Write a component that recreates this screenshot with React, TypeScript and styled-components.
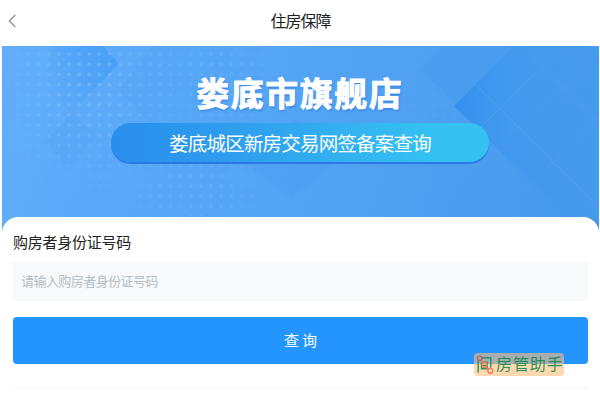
import React, { useState } from 'react';
import styled, { createGlobalStyle } from 'styled-components';

const GlobalStyle = createGlobalStyle`
  * {
    box-sizing: border-box;
  }
  body {
    margin: 0;
    background: #fff;
    font-family: 'Noto Sans CJK SC', sans-serif;
  }
`;

const Page = styled.div`
  display: flex;
  flex-direction: column;
  width: 600px;
  height: 400px;
  padding: 0 1px 0 2px;
  overflow: hidden;
`;

const NavBar = styled.header`
  display: grid;
  grid-template-columns: 40px 1fr 40px;
  align-items: center;
  flex: none;
  height: 46px;
  padding-bottom: 6px;
`;

const BackButton = styled.button`
  display: flex;
  border: 0;
  padding: 2px 0 0 6px;
  background: none;
`;

const NavTitle = styled.h1`
  margin: 0;
  color: #222;
  font-size: 16px;
  font-weight: 400;
  line-height: 24px;
  letter-spacing: -1px;
  text-align: center;
`;

const Banner = styled.section`
  position: relative;
  display: flex;
  flex-direction: column;
  align-items: center;
  flex: none;
  height: 187px;
  padding: 25px 1px 0 0;
`;

const BannerArt = styled.svg`
  position: absolute;
  inset: 0;
`;

const StoreName = styled.h2`
  position: relative;
  margin: 0;
  color: #fff;
  font-size: 32.5px;
  font-weight: 700;
  line-height: 42px;
  letter-spacing: 2px;
  -webkit-text-stroke: 1px #fff;
  text-shadow: 1px 2px 2px rgba(24, 100, 205, 0.45);
`;

const ServicePill = styled.div`
  position: relative;
  width: 378px;
  height: 39px;
  margin-top: 10px;
  border-radius: 20px;
  background: linear-gradient(90deg, #298eed, #2f9fee 35%, #35c2f2 85%);
  box-shadow: 0 2px 0 #2b78e4;
  color: #fff;
  font-size: 19.5px;
  line-height: 39px;
  letter-spacing: -0.8px;
  text-align: center;
`;

const Sheet = styled.main`
  position: relative;
  display: flex;
  flex-direction: column;
  flex: 1;
  margin-top: -16px;
  padding: 13px 11px 0;
  border-radius: 16px 16px 0 0;
  background: #fff;
`;

const FieldLabel = styled.label`
  color: #222;
  font-size: 15px;
  line-height: 24px;
  letter-spacing: -0.25px;
`;

const FieldInput = styled.input`
  width: 100%;
  height: 39px;
  margin-top: 8px;
  border: 0;
  padding: 0 8px 2px;
  background: #f7f9fb;
  color: #222;
  font-family: inherit;
  font-size: 13px;
  letter-spacing: -0.55px;
  outline: none;

  &::placeholder {
    color: #b3bdc4;
    opacity: 1;
  }
`;

const SubmitButton = styled.button`
  width: 100%;
  height: 47px;
  margin-top: 16px;
  border: 0;
  border-radius: 4px;
  padding: 0 0 2px 3px;
  background: #2494ff;
  color: #fff;
  font-family: inherit;
  font-size: 15px;
  letter-spacing: 3px;
`;

const Divider = styled.hr`
  width: 100%;
  height: 1px;
  margin: 24px 0 0;
  border: 0;
  background: #f5f5f5;
`;

const HelperBadge = styled.div`
  position: absolute;
  right: 35px;
  bottom: 24px;
  display: flex;
  align-items: center;
  gap: 2px;
  width: 90px;
  height: 23px;
  padding-left: 2px;
  border-radius: 4px;
  background: rgba(255, 190, 123, 0.6);
  color: rgba(6, 136, 72, 0.88);
  font-size: 16px;
  line-height: 21px;
  letter-spacing: 0.9px;
  white-space: nowrap;
`;

const HelperName = styled.span`
  height: 23px;
`;

function BannerBackground() {
  return (
    <BannerArt width="597" height="187" viewBox="0 0 597 187">
      <defs>
        <linearGradient id="sky" x1="0" y1="0" x2="1" y2="0.1">
          <stop offset="0" stopColor="#62aefc" />
          <stop offset="0.45" stopColor="#55a5f5" />
          <stop offset="1" stopColor="#479bed" />
        </linearGradient>
        <linearGradient id="diamond" x1="117" y1="10" x2="45" y2="45" gradientUnits="userSpaceOnUse">
          <stop offset="0" stopColor="#3c98f6" stopOpacity="0.6" />
          <stop offset="0.5" stopColor="#3f9bf6" stopOpacity="0.4" />
          <stop offset="1" stopColor="#4ba0f6" stopOpacity="0" />
        </linearGradient>
        <linearGradient id="slab" x1="0" y1="0.3" x2="1" y2="0.3">
          <stop offset="0" stopColor="#2b8bec" stopOpacity="0.75" />
          <stop offset="0.45" stopColor="#3c95ee" stopOpacity="0.4" />
          <stop offset="1" stopColor="#4599ed" stopOpacity="0.2" />
        </linearGradient>
        <radialGradient id="glow">
          <stop offset="0" stopColor="#fff" stopOpacity="1" />
          <stop offset="1" stopColor="#fff" stopOpacity="0.1" />
        </radialGradient>
        <pattern id="dots" x="1" y="3" width="10.15" height="10.15" patternUnits="userSpaceOnUse">
          <circle cx="5.1" cy="5.1" r="1.9" fill="#9dd0ff" />
        </pattern>
        <mask id="dotFade">
          <ellipse cx="86" cy="36" rx="90" ry="110" fill="url(#glow)" opacity="0.9" />
          <ellipse cx="215" cy="30" rx="75" ry="65" fill="url(#glow)" opacity="0.5" />
          <ellipse cx="195" cy="145" rx="75" ry="50" fill="url(#glow)" opacity="0.5" />
          <ellipse cx="430" cy="65" rx="60" ry="40" fill="url(#glow)" opacity="0.2" />
        </mask>
      </defs>
      <rect width="597" height="187" fill="url(#sky)" />
      <path d="M52 0H101L117 18L69 67L40 40Z" fill="url(#diamond)" />
      <path d="M69 67L95 91L68 123L43 97Z" fill="#4c9ff4" opacity="0.22" />
      <path d="M150 0H223L243 23L169 98L117 45Z" fill="#4b9ff4" opacity="0.16" />
      <path d="M105 65L195 155L165 187H70L40 130Z" fill="#58a8f8" opacity="0.2" />
      <path d="M295 72L336 113L290 152L240 115Z" fill="#4397ee" opacity="0.2" />
      <path d="M419 24L442 0H510L455 60Z" fill="#4296ec" opacity="0.2" />
      <path d="M452 60L512 0H597V187H581Z" fill="url(#slab)" />
      <g stroke="#7bbdf8" strokeWidth="0.8" opacity="0.32" fill="none">
        <path d="M472 37L597 162" />
        <path d="M525 5L597 76" opacity="0.6" />
        <path d="M475 85L535 26" />
        <path d="M450 140L590 15" opacity="0.4" />
        <path d="M528 140L597 70" opacity="0.5" />
      </g>
      <rect width="597" height="187" fill="url(#dots)" mask="url(#dotFade)" opacity="0.45" />
    </BannerArt>
  );
}

function BackIcon() {
  return (
    <svg width="9" height="14" viewBox="0 0 9 14" fill="none" stroke="#8c8c8c" strokeWidth="1.2">
      <path d="M7.3 1L1.3 7L7.3 13" />
    </svg>
  );
}

function HelperIcon() {
  return (
    <svg width="18" height="21" viewBox="0 0 18 21" fill="none">
      <path
        d="M2.2 6V18.5M6 3.7H14.8V13.5M5.5 8.3H11.2V14.7H5.5V8.3M5.5 11.5H11"
        stroke="#259567"
        strokeWidth="1.5"
      />
      <g stroke="#f17a58" strokeWidth="1.4">
        <path d="M5 6L7 9M10 13L12 15" />
        <circle cx="3.6" cy="4.3" r="2.2" stroke="#c0606a" />
        <circle cx="8.5" cy="10.7" r="2.5" />
        <circle cx="14.3" cy="16.8" r="2.4" />
      </g>
    </svg>
  );
}

function App() {
  const [idNumber, setIdNumber] = useState<string>('');

  return (
    <Page>
      <GlobalStyle />
      <NavBar>
        <BackButton aria-label="返回">
          <BackIcon />
        </BackButton>
        <NavTitle>住房保障</NavTitle>
      </NavBar>
      <Banner>
        <BannerBackground />
        <StoreName>娄底市旗舰店</StoreName>
        <ServicePill>娄底城区新房交易网签备案查询</ServicePill>
      </Banner>
      <Sheet>
        <FieldLabel htmlFor="idNumber">购房者身份证号码</FieldLabel>
        <FieldInput
          id="idNumber"
          placeholder="请输入购房者身份证号码"
          value={idNumber}
          onChange={(event: React.ChangeEvent<HTMLInputElement>) => {
            setIdNumber(event.currentTarget.value);
          }}
        />
        <SubmitButton>查询</SubmitButton>
        <Divider />
        <HelperBadge>
          <HelperIcon />
          <HelperName>房管助手</HelperName>
        </HelperBadge>
      </Sheet>
    </Page>
  );
}

export default App;
